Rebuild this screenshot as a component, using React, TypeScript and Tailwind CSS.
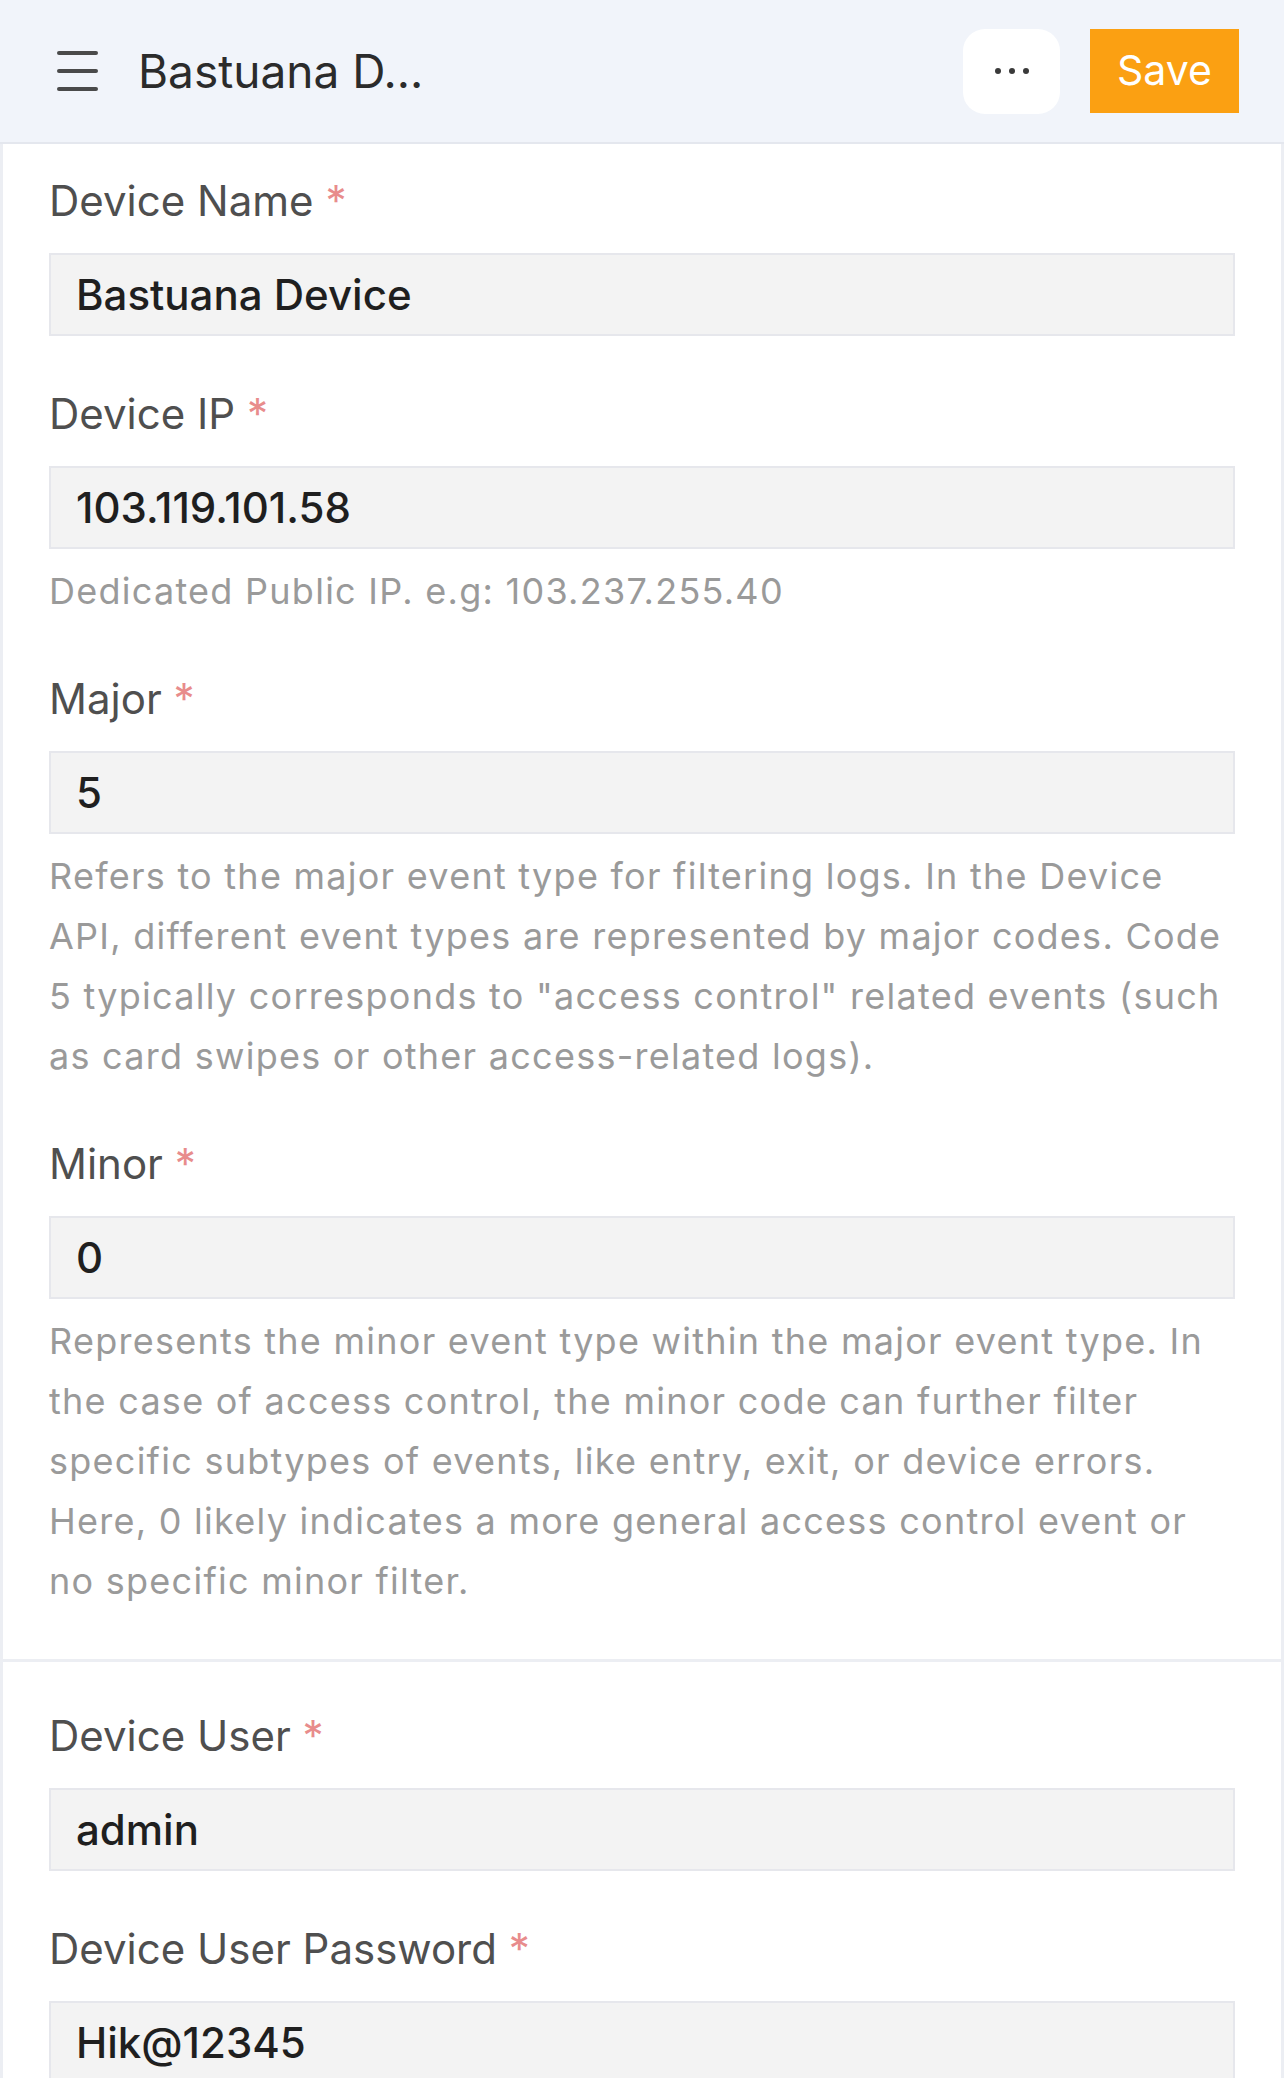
import React from "react";

type FieldProps = {
  label: string;
  value: string;
  help?: string[];
};

function Field({ label, value, help }: FieldProps) {
  return (
    <div className="flex flex-col">
      <label className="text-[42px] leading-[48px] text-[#4f4f4f]">
        {label} <span className="text-[#e88c8c]">*</span>
      </label>
      <div className="mt-[28px] h-[83px] flex items-center bg-[#f3f3f3] border-2 border-[#e6e7ec] pl-[25px] text-[42px] font-medium text-[#1f1f1f]">
        {value}
      </div>
      {help && (
        <p className="mt-[12px] text-[36px] leading-[60px] tracking-[0.035em] text-[#9a9a9a]">
          {help.map((line, i) => (
            <span key={i} className="block whitespace-nowrap">
              {line}
            </span>
          ))}
        </p>
      )}
    </div>
  );
}

export default function App() {
  return (
    <div className="min-h-screen bg-[#eceef3] font-['Inter',sans-serif]">
      {/* Header */}
      <header className="h-[144px] flex items-center justify-between bg-[#f1f4fa] border-b-2 border-[#e4e7ee] pl-[57px] pr-[45px]">
        <div className="flex items-center gap-[40px]">
          <div className="flex flex-col gap-[14px] w-[41px]">
            <span className="h-[4px] rounded-full bg-[#4a4a4a]" />
            <span className="h-[4px] rounded-full bg-[#4a4a4a]" />
            <span className="h-[4px] rounded-full bg-[#4a4a4a]" />
          </div>
          <h1 className="text-[46px] text-[#2b2b2b]">Bastuana D...</h1>
        </div>
        <div className="flex items-center gap-[30px]">
          <button className="w-[97px] h-[85px] rounded-[22px] bg-white flex items-center justify-center gap-[8px]">
            <span className="w-[6px] h-[6px] rounded-full bg-[#3a3a3a]" />
            <span className="w-[6px] h-[6px] rounded-full bg-[#3a3a3a]" />
            <span className="w-[6px] h-[6px] rounded-full bg-[#3a3a3a]" />
          </button>
          <button className="w-[149px] h-[84px] bg-[#fba012] text-white text-[41px]">Save</button>
        </div>
      </header>

      {/* Form */}
      <main className="mx-[3px] bg-white">
        <section className="px-[46px] pt-[33px] pb-[48px] flex flex-col gap-[54px]">
          <Field label="Device Name" value="Bastuana Device" />
          <Field
            label="Device IP"
            value="103.119.101.58"
            help={["Dedicated Public IP. e.g: 103.237.255.40"]}
          />
          <Field
            label="Major"
            value="5"
            help={[
              "Refers to the major event type for filtering logs. In the Device",
              "API, different event types are represented by major codes. Code",
              '5 typically corresponds to "access control" related events (such',
              "as card swipes or other access-related logs).",
            ]}
          />
          <Field
            label="Minor"
            value="0"
            help={[
              "Represents the minor event type within the major event type. In",
              "the case of access control, the minor code can further filter",
              "specific subtypes of events, like entry, exit, or device errors.",
              "Here, 0 likely indicates a more general access control event or",
              "no specific minor filter.",
            ]}
          />
        </section>

        <div className="h-[3px] bg-[#eceef3]" />

        <section className="px-[46px] pt-[50px] pb-[48px] flex flex-col gap-[54px]">
          <Field label="Device User" value="admin" />
          <Field label="Device User Password" value="Hik@12345" />
        </section>
      </main>
    </div>
  );
}
